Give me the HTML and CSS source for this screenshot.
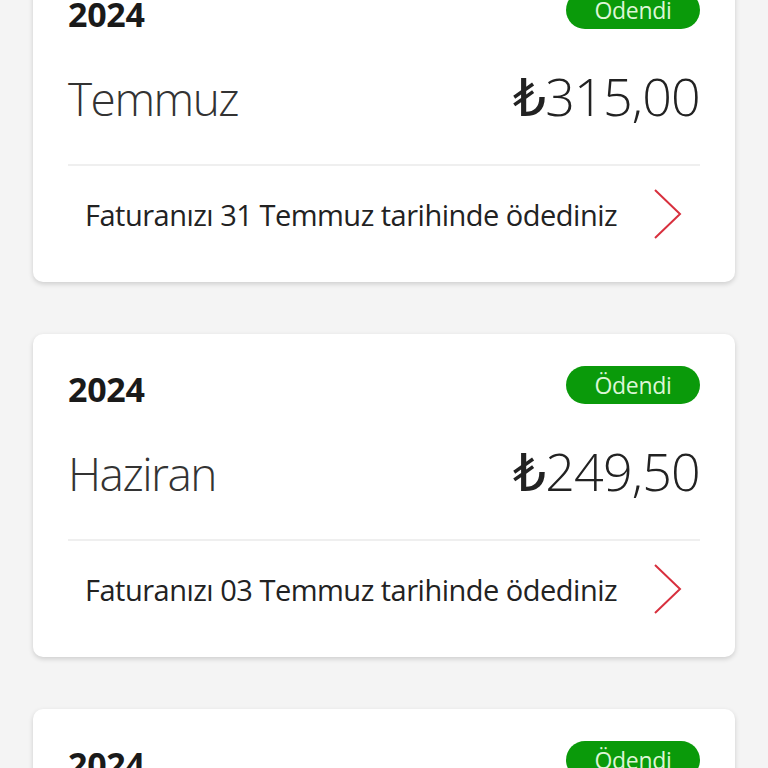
FILE: index.html
```html
<!DOCTYPE html>
<html lang="tr">
<head>
<meta charset="utf-8">
<link rel="stylesheet" href="styles.css">
</head>
<body>
<div class="list">
  <div class="card">
    <div class="head">
      <span class="year">2024</span>
      <span class="badge">Ödendi</span>
    </div>
    <div class="main">
      <span class="month">Temmuz</span>
      <span class="amount"><span class="cur">₺</span>315,00</span>
    </div>
    <div class="foot">
      <span class="note">Faturanızı 31 Temmuz tarihinde ödediniz</span>
      <svg class="chev" width="30" height="52" viewBox="0 0 30 52"><polyline points="2,2 27,26 2,50" fill="none" stroke="#d8303e" stroke-width="2"/></svg>
    </div>
  </div>
  <div class="card">
    <div class="head">
      <span class="year">2024</span>
      <span class="badge">Ödendi</span>
    </div>
    <div class="main">
      <span class="month">Haziran</span>
      <span class="amount"><span class="cur">₺</span>249,50</span>
    </div>
    <div class="foot">
      <span class="note">Faturanızı 03 Temmuz tarihinde ödediniz</span>
      <svg class="chev" width="30" height="52" viewBox="0 0 30 52"><polyline points="2,2 27,26 2,50" fill="none" stroke="#d8303e" stroke-width="2"/></svg>
    </div>
  </div>
  <div class="card">
    <div class="head">
      <span class="year">2024</span>
      <span class="badge">Ödendi</span>
    </div>
    <div class="main">
      <span class="month">Mayıs</span>
      <span class="amount"><span class="cur">₺</span>249,50</span>
    </div>
    <div class="foot">
      <span class="note">Faturanızı 03 Haziran tarihinde ödediniz</span>
      <svg class="chev" width="30" height="52" viewBox="0 0 30 52"><polyline points="2,2 27,26 2,50" fill="none" stroke="#d8303e" stroke-width="2"/></svg>
    </div>
  </div>
</div>
</body>
</html>
```

FILE: styles.css
```css
html, body {
  margin: 0;
  padding: 0;
  background: #f4f4f4;
  font-family: "Open Sans", "DejaVu Sans", sans-serif;
  color: #222;
}
body {
  height: 768px;
  overflow: hidden;
}
.list {
  display: flex;
  flex-direction: column;
  gap: 52px;
  margin-top: -41px;
  padding: 0 33px;
}
.card {
  background: #fff;
  border-radius: 10px;
  box-shadow: 0 2px 5px rgba(0,0,0,0.16);
  height: 323px;
  flex-shrink: 0;
  box-sizing: border-box;
  padding: 32px 35px 0 35px;
  display: flex;
  flex-direction: column;
}
.head {
  display: flex;
  justify-content: space-between;
  align-items: flex-start;
  height: 38px;
}
.year {
  font-weight: 700;
  font-size: 34px;
  line-height: 38px;
  margin-top: 4px;
  letter-spacing: -0.3px;
  color: #1a1a1a;
}
.badge {
  background: #0a9a0a;
  color: #dcf6d6;
  font-size: 23px;
  line-height: 38px;
  height: 38px;
  width: 134px;
  text-align: center;
  border-radius: 19px;
  letter-spacing: -0.3px;
}
.main {
  display: flex;
  justify-content: space-between;
  align-items: baseline;
  margin-top: 32px;
  height: 103px;
  border-bottom: 2px solid #efefef;
}
.month {
  font-size: 46px;
  line-height: 70px;
  font-weight: 300;
  color: #333;
  letter-spacing: -1.5px;
}
.amount {
  font-size: 52px;
  line-height: 70px;
  font-weight: 300;
  color: #222;
  letter-spacing: -0.8px;
}
.cur {
  font-weight: 500;
}
.foot {
  display: flex;
  justify-content: space-between;
  align-items: center;
  padding: 0 17px;
  height: 96px;
}
.note {
  font-size: 29px;
  color: #222;
  letter-spacing: -0.5px;
}
.chev {
  display: block;
}
```
